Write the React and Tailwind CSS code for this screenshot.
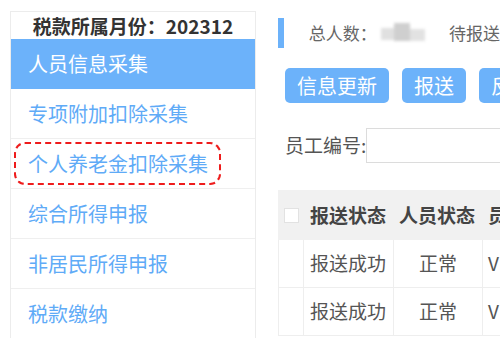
import React from 'react'

const menuItems = [
  '专项附加扣除采集',
  '个人养老金扣除采集',
  '综合所得申报',
  '非居民所得申报',
  '税款缴纳'
]

const rows = [
  { send: '报送成功', status: '正常', extra: 'V' },
  { send: '报送成功', status: '正常', extra: 'V' }
]

const App = () => {
  return (
    <div
      className="w-[500px] h-[338px] overflow-hidden bg-white flex"
      style={{ fontFamily: '"Noto Sans CJK SC", "Liberation Sans", sans-serif' }}
    >
      {/* 左侧菜单 */}
      <div className="ml-[10px] mt-[11px] w-[246px] shrink-0 border border-[#ececec] border-b-0 h-[340px]">
        <div className="h-[27px] flex items-center justify-center text-[19px] font-bold text-[#333] leading-none">
          税款所属月份：202312
        </div>
        <div className="h-[50px] bg-[#6cb2fa] flex items-center pl-[17px] text-white text-[20px] leading-none">
          人员信息采集
        </div>
        {menuItems.map((item, i) => (
          <div
            key={item}
            className="relative h-[50px] flex items-center pl-[17px] text-[20px] leading-none text-[#5fabf7] border-b border-[#efefef]"
          >
            {i === 1 && (
              <div className="absolute left-[3px] top-[3px] w-[207px] h-[43px] border-[2.5px] border-dashed border-[#ee1c1c] rounded-[11px]" />
            )}
            {item}
          </div>
        ))}
      </div>

      {/* 右侧内容 */}
      <div className="ml-[22px] flex-1 min-w-0 overflow-hidden">
        <div className="flex items-center mt-[18px] h-[30px] whitespace-nowrap">
          <div className="w-[6px] h-[30px] bg-[#6cb2fa]" />
          <span className="ml-[25px] text-[17px] text-[#666]">总人数：</span>
          <div className="ml-[4px] relative w-[44px] h-[20px] blur-[1.5px]">
            <div className="absolute left-0 top-[5px] w-[13px] h-[12px] bg-[#e0e0e0]" />
            <div className="absolute left-[13px] top-[0px] w-[16px] h-[18px] bg-[#cfcfcf]" />
            <div className="absolute left-[29px] top-[6px] w-[15px] h-[12px] bg-[#e2e2e2]" />
          </div>
          <span className="ml-[26px] text-[17px] text-[#666]">待报送</span>
        </div>

        <div className="flex mt-[20px] ml-[7px] gap-[13px] whitespace-nowrap">
          {['信息更新', '报送', '反馈'].map((b) => (
            <div
              key={b}
              className="h-[35px] px-[12px] bg-[#6cb2fa] rounded-[5px] text-white text-[20px] flex items-center leading-none shrink-0"
            >
              {b}
            </div>
          ))}
        </div>

        <div className="flex items-center mt-[25px] ml-[7px] whitespace-nowrap">
          <span className="text-[19px] text-[#555] w-[98px]">员工编号:</span>
          <div className="h-[35px] w-[200px] border border-[#dcdcdc] shrink-0" />
        </div>

        <div className="mt-[27px] w-[260px]">
          <div className="flex h-[50px] bg-[#f1f1f1] items-center text-[19px] font-bold text-[#444] whitespace-nowrap">
            <div className="w-[26px] flex justify-center shrink-0">
              <div className="w-[15px] h-[15px] bg-white border border-[#e2e2e2]" />
            </div>
            <div className="w-[90px] pl-[6px] shrink-0">报送状态</div>
            <div className="w-[89px] pl-[5px] shrink-0">人员状态</div>
            <div className="pl-[5px]">员</div>
          </div>
          {rows.map((r, i) => (
            <div
              key={i}
              className="flex h-[48px] items-center text-[19px] text-[#555] border-b border-[#eeeeee] border-l whitespace-nowrap"
            >
              <div className="w-[25px] h-full border-r border-[#eeeeee] shrink-0" />
              <div className="w-[90px] h-full pl-[6px] flex items-center border-r border-[#eeeeee] shrink-0">
                {r.send}
              </div>
              <div className="w-[89px] h-full flex items-center justify-center border-r border-[#eeeeee] shrink-0">
                {r.status}
              </div>
              <div className="pl-[5px] font-normal">{r.extra}</div>
            </div>
          ))}
        </div>
      </div>
    </div>
  )
}

export default App
